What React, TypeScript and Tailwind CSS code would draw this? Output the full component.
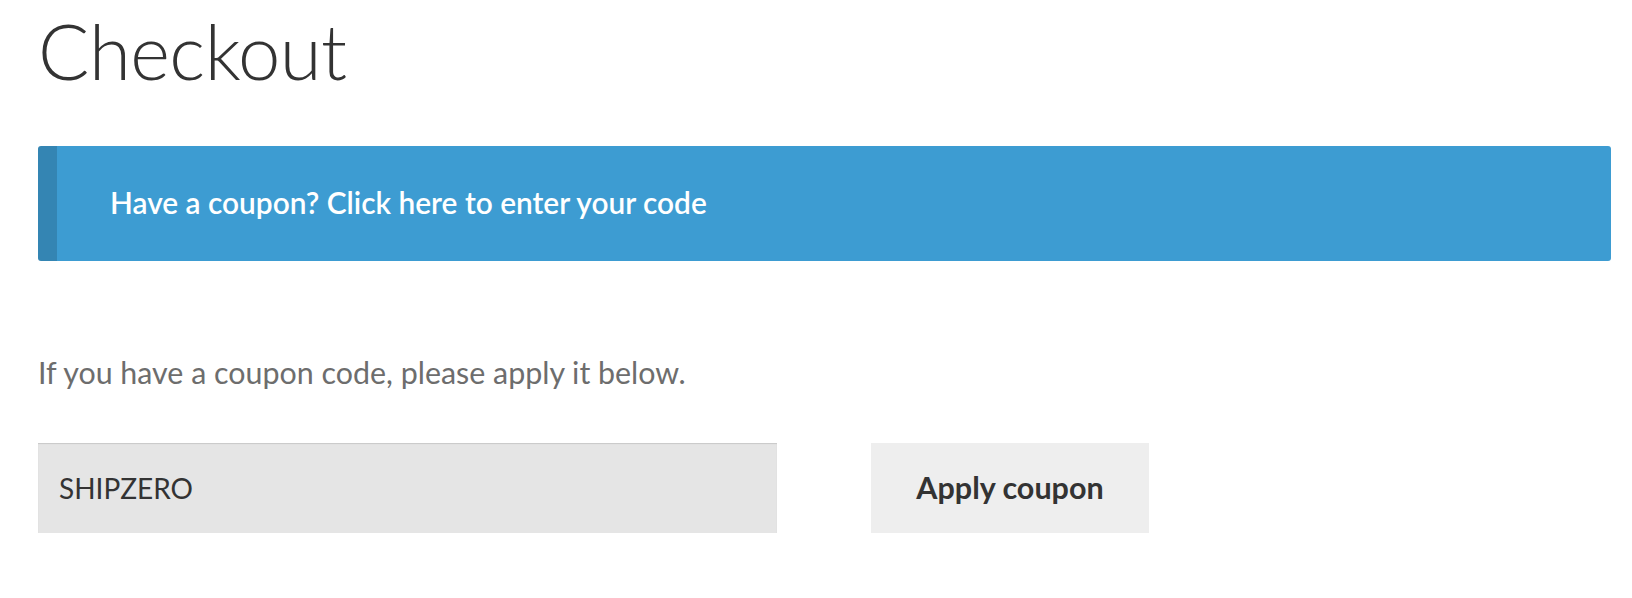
import React from "react";

const App = () => {
  return (
    <div className="min-h-[598px] bg-white pl-[38px] pr-[21px] font-['Lato','Liberation_Sans',sans-serif]">
      <h1 className="pt-[7px] h-[100px] text-[76px] leading-[88px] font-light text-[#333333] tracking-[-0.5px]">
        Checkout
      </h1>

      <div className="mt-[46px] flex h-[115px] items-center rounded-[3px] border-l-[19px] border-[#3485b3] bg-[#3d9cd2] pl-[53px]">
        <a href="#" className="text-[29.85px] font-semibold text-white">
          Have a coupon? Click here to enter your code
        </a>
      </div>

      <p className="mt-[93px] text-[30.4px] leading-[36px] text-[#6d6d6d]">
        If you have a coupon code, please apply it below.
      </p>

      <form className="mt-[53px] flex items-stretch gap-[94px]">
        <input
          type="text"
          defaultValue="SHIPZERO"
          className="h-[90px] w-[739px] bg-[#e5e5e5] px-[21px] text-[28px] text-[#333333] shadow-[inset_0_1px_1px_rgba(0,0,0,0.125)] outline-none"
        />
        <button
          type="button"
          className="h-[90px] w-[278px] bg-[#eeeeee] text-[30.5px] font-bold text-[#333333]"
        >
          Apply coupon
        </button>
      </form>
    </div>
  );
};

export default App;
